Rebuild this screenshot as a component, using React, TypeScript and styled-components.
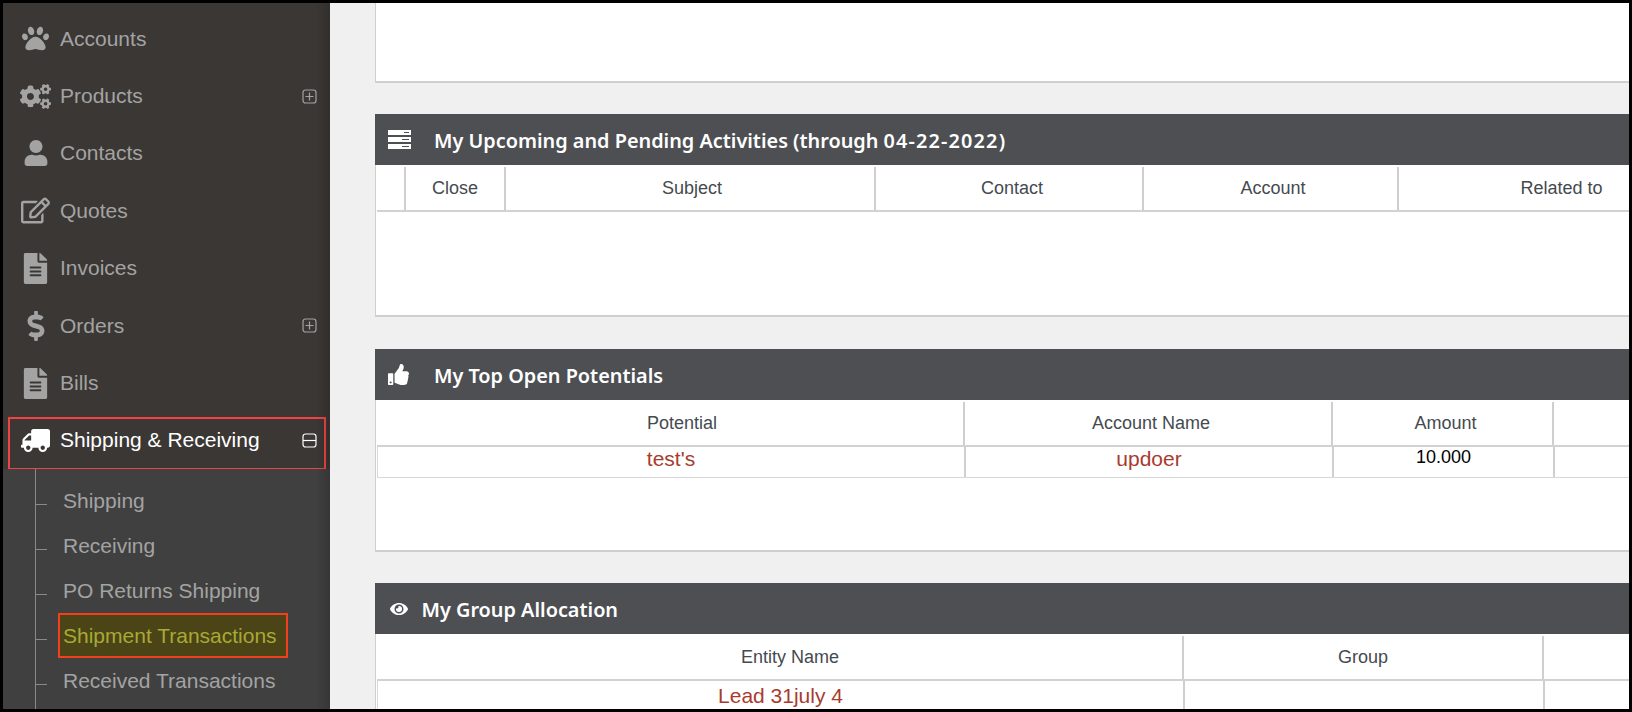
import type { ReactNode } from 'react';
import styled, { createGlobalStyle } from 'styled-components';
import { FaCogs, FaDollarSign, FaEye, FaFileAlt, FaPaw, FaRegEdit, FaThumbsUp, FaTruck, FaUser } from 'react-icons/fa';

const GlobalStyle = createGlobalStyle`
  html, body {
    margin: 0;
    padding: 0;
    background: #000;
    font-family: "Liberation Sans", Arial, sans-serif;
  }
`;

const Frame = styled.div`
  box-sizing: border-box;
  width: 1632px;
  height: 712px;
  border: 3px solid #000;
  display: flex;
  overflow: hidden;
  background: #f0f0f0;
`;

const Sidebar = styled.nav`
  position: relative;
  flex: 0 0 327px;
  display: flex;
  flex-direction: column;
  padding-top: 7px;
  box-sizing: border-box;
  background: #3b3734;

  &::after {
    content: '';
    position: absolute;
    inset: 0;
    pointer-events: none;
    background: linear-gradient(to left, rgba(0, 0, 0, 0.16), rgba(0, 0, 0, 0) 14px);
  }
`;

const MenuRow = styled.div<{ $active?: boolean }>`
  position: relative;
  flex: 0 0 57.4px;
  display: flex;
  align-items: center;
  font-size: 21px;
  color: ${(props) => (props.$active ? '#ffffff' : '#a3a3a3')};

  ${(props) =>
    props.$active &&
    `
    &::before {
      content: '';
      position: absolute;
      left: 5px;
      right: 4px;
      top: 5px;
      bottom: -1px;
      border: 2px solid #f04444;
    }
  `}
`;

const MenuIcon = styled.span`
  flex: 0 0 57px;
  display: flex;
  justify-content: center;
  box-sizing: border-box;
  padding-left: 8px;
`;

const MenuLabel = styled.span`
  flex: 1;
`;

const Toggle = styled.svg`
  width: 15px;
  height: 15px;
  margin-right: 13px;
  fill: none;
  stroke: currentColor;
  stroke-width: 1.2;
`;

const SubMenu = styled.div`
  flex: 1;
  position: relative;
  padding-top: 9px;
  background: #404040;

  &::before {
    content: '';
    position: absolute;
    left: 32px;
    top: 0;
    bottom: 0;
    width: 1px;
    background: #8a8a8a;
  }
`;

const SubItem = styled.div<{ $active?: boolean }>`
  position: relative;
  height: 45px;
  display: flex;
  align-items: center;
  padding-left: 60px;
  font-size: 21px;
  color: ${(props) => (props.$active ? '#a9a935' : '#a3a3a3')};

  &::before {
    content: '';
    position: absolute;
    left: 32px;
    top: 26px;
    width: 12px;
    height: 1px;
    background: #8a8a8a;
  }

  ${(props) =>
    props.$active &&
    `
    &::after {
      content: '';
      position: absolute;
      z-index: 0;
      left: 55px;
      width: 230px;
      top: 0;
      height: 45px;
      box-sizing: border-box;
      border: 2px solid #f2401f;
      background: #4a4416;
    }
  `}
`;

const SubText = styled.span`
  position: relative;
  z-index: 1;
`;

const Main = styled.main`
  flex: 1;
  min-width: 0;
  display: flex;
  flex-direction: column;
  gap: 31.5px;
  padding-left: 45px;
  overflow: hidden;
`;

const Stub = styled.div`
  flex: 0 0 79.5px;
  box-sizing: border-box;
  background: #fff;
  border-left: 1px solid #cfcfcf;
  border-bottom: 2px solid #cfcfcf;
`;

const Card = styled.section`
  flex: 0 0 203px;
  box-sizing: border-box;
  display: flex;
  flex-direction: column;
  background: #fff;
  border-bottom: 2px solid #cfcfcf;
`;

const CardHeader = styled.header`
  flex: 0 0 51px;
  display: flex;
  align-items: center;
  padding-left: 13px;
  background: #4d4f53;
  color: #fff;
`;

const IconSlot = styled.span<{ $width: number; $inset?: number }>`
  flex: 0 0 ${(props) => props.$width}px;
  display: flex;
  padding-left: ${(props) => props.$inset ?? 0}px;
  box-sizing: border-box;
`;

const CardTitle = styled.h2`
  margin: 0;
  padding-top: 2px;
  font-family: "Noto Sans", sans-serif;
  font-size: 19.85px;
  font-weight: 600;
`;

const TitleDate = styled.span`
  letter-spacing: 1.15px;
`;

const CardBody = styled.div`
  flex: 1;
  min-height: 0;
  padding-top: 2px;
  border-left: 1px solid #cfcfcf;
  padding-left: 1px;
  overflow: hidden;
`;

const HeadRow = styled.div<{ $cols: string }>`
  box-sizing: border-box;
  display: grid;
  grid-template-columns: ${(props) => props.$cols};
  height: 45px;
  border-bottom: 2px solid #d2d2d2;
`;

const DataRow = styled.div<{ $cols: string }>`
  box-sizing: border-box;
  display: grid;
  grid-template-columns: ${(props) => props.$cols};
  height: 31px;
  border-bottom: 1px solid #d8d8d8;
  border-left: 1px solid #d8d8d8;
`;

const HeadCell = styled.div<{ $shift?: number }>`
  display: flex;
  align-items: center;
  justify-content: center;
  border-right: 2px solid #cfcfcf;
  font-size: 18px;
  color: #444a50;
  padding-left: ${(props) => Math.max(props.$shift ?? 0, 0)}px;
  padding-right: ${(props) => Math.max(-(props.$shift ?? 0), 0)}px;
  white-space: nowrap;
`;

const DataCell = styled.div<{ $link?: boolean; $top?: number }>`
  text-align: center;
  border-right: 2px solid #cfcfcf;
  white-space: nowrap;
  padding-top: ${(props) => props.$top ?? 0}px;
  color: ${(props) => (props.$link ? '#a93b2e' : '#000')};
  font-size: ${(props) => (props.$link ? '21px' : '18px')};
  line-height: ${(props) => (props.$link ? '23px' : '20px')};
`;

const ServerIcon = () => (
  <svg width="23" height="19" viewBox="0 0 23 19" fill="#fff">
    <path d="M0 0h23v5H0zM0 7h23v5H0zM0 14h23v5H0z" />
    <path d="M16 2h5v1h-5zM14 9h7v1h-7zM14 16h7v1h-7z" fill="#4d4f53" />
  </svg>
);

const PlusBox = () => (
  <Toggle viewBox="0 0 15 15">
    <rect x="1" y="1" width="13" height="13" rx="2.5" />
    <path d="M7.500 3.500v8M3.500 7.500h8" />
  </Toggle>
);

const MinusBox = () => (
  <Toggle viewBox="0 0 15 15">
    <rect x="1" y="1" width="13" height="13" rx="2.5" />
    <path d="M1 7.500h13" />
  </Toggle>
);

type SectionProps = {
  icon: ReactNode;
  slot: number;
  inset?: number;
  title: ReactNode;
  children: ReactNode;
};

function Section({ icon, slot, inset, title, children }: SectionProps) {
  return (
    <Card>
      <CardHeader>
        <IconSlot $width={slot} $inset={inset}>
          {icon}
        </IconSlot>
        <CardTitle>{title}</CardTitle>
      </CardHeader>
      <CardBody>{children}</CardBody>
    </Card>
  );
}

const activityCols = '29px 100px 370px 268px 255px 400px';
const potentialCols = '588px 368px 221px 200px';
const groupCols = '807px 360px 200px';

const menu: { icon: ReactNode; label: string; toggle?: boolean }[] = [
  { icon: <FaPaw size={27} />, label: 'Accounts' },
  { icon: <FaCogs size={31} />, label: 'Products', toggle: true },
  { icon: <FaUser size={26} />, label: 'Contacts' },
  { icon: <FaRegEdit size={29} />, label: 'Quotes' },
  { icon: <FaFileAlt size={31} />, label: 'Invoices' },
  { icon: <FaDollarSign size={30} />, label: 'Orders', toggle: true },
  { icon: <FaFileAlt size={31} />, label: 'Bills' },
];

const subItems = ['Shipping', 'Receiving', 'PO Returns Shipping', 'Shipment Transactions', 'Received Transactions'];

export default function App() {
  return (
    <Frame>
      <GlobalStyle />
      <Sidebar>
        {menu.map((item) => (
          <MenuRow key={item.label}>
            <MenuIcon>{item.icon}</MenuIcon>
            <MenuLabel>{item.label}</MenuLabel>
            {item.toggle && <PlusBox />}
          </MenuRow>
        ))}
        <MenuRow $active>
          <MenuIcon>
            <FaTruck size={29} style={{ transform: 'scaleX(-1)' }} />
          </MenuIcon>
          <MenuLabel>Shipping &amp; Receiving</MenuLabel>
          <MinusBox />
        </MenuRow>
        <SubMenu>
          {subItems.map((label) => (
            <SubItem key={label} $active={label === 'Shipment Transactions'}>
              <SubText>{label}</SubText>
            </SubItem>
          ))}
        </SubMenu>
      </Sidebar>
      <Main>
        <Stub />
        <Section
          icon={<ServerIcon />}
          slot={46}
          title={
            <>
              My Upcoming and Pending Activities (through <TitleDate>04-22-2022</TitleDate>)
            </>
          }
        >
          <HeadRow $cols={activityCols}>
            <HeadCell />
            <HeadCell>Close</HeadCell>
            <HeadCell $shift={4}>Subject</HeadCell>
            <HeadCell $shift={6}>Contact</HeadCell>
            <HeadCell $shift={5}>Account</HeadCell>
            <HeadCell $shift={-73}>Related to</HeadCell>
          </HeadRow>
        </Section>
        <Section icon={<FaThumbsUp size={21} />} slot={46} title="My Top Open Potentials">
          <HeadRow $cols={potentialCols}>
            <HeadCell $shift={24}>Potential</HeadCell>
            <HeadCell $shift={6}>Account Name</HeadCell>
            <HeadCell $shift={6}>Amount</HeadCell>
            <HeadCell />
          </HeadRow>
          <DataRow $cols={potentialCols}>
            <DataCell $link>test's</DataCell>
            <DataCell $link>updoer</DataCell>
            <DataCell>10.000</DataCell>
            <DataCell />
          </DataRow>
        </Section>
        <Section icon={<FaEye size={18} />} slot={33.5} inset={2} title="My Group Allocation">
          <HeadRow $cols={groupCols}>
            <HeadCell $shift={21}>Entity Name</HeadCell>
            <HeadCell>Group</HeadCell>
            <HeadCell />
          </HeadRow>
          <DataRow $cols={groupCols}>
            <DataCell $link $top={3}>
              Lead 31july 4
            </DataCell>
            <DataCell />
            <DataCell />
          </DataRow>
        </Section>
      </Main>
    </Frame>
  );
}
